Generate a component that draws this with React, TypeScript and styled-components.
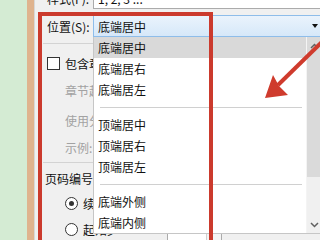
import React from 'react';
import styled, { createGlobalStyle } from 'styled-components';

const GlobalStyle = createGlobalStyle`
  html, body {
    margin: 0;
    padding: 0;
  }
  body {
    font-family: "Noto Sans CJK SC", "Noto Sans", sans-serif;
    font-size: 12px;
    color: #111;
  }
`;

const listGroups = [
  ['底端居中', '底端居右', '底端居左'],
  ['顶端居中', '顶端居右', '顶端居左'],
  ['底端外侧', '底端内侧'],
];

function App() {
  return (
    <Screen>
      <GlobalStyle />
      <GreenStrip />
      <TanStrip />

      <Dialog>
        <FieldRow $top={-13}>
          <FieldLabel>样式(F):</FieldLabel>
          <ComboBox>1, 2, 3 ...</ComboBox>
        </FieldRow>
        <FieldRow $top={6}>
          <FieldLabel>位置(S):</FieldLabel>
          <ComboBox $active>
            底端居中
            <DropArrow />
          </ComboBox>
        </FieldRow>

        <Divider $top={6} />

        {/* texts under the open list are clipped where the list starts (x 93) */}
        <OptionRow $top={9} $indent={4}>
          <Checkbox />
          <OptionText $clip={30}>包含章节号(N)</OptionText>
        </OptionRow>
        <OptionRow $top={7} $indent={22}>
          <OptionText $muted $flush $clip={28}>章节起始样式(P):</OptionText>
        </OptionRow>
        <OptionRow $top={10} $indent={22}>
          <OptionText $muted $flush $clip={28}>使用分隔符(E):</OptionText>
        </OptionRow>
        <OptionRow $top={7} $indent={22}>
          <OptionText $muted $flush>示例:</OptionText>
        </OptionRow>

        <Divider $top={5} />

        <OptionRow $top={5} $indent={2}>
          <OptionText $flush>页码编号</OptionText>
        </OptionRow>
        <OptionRow $top={5} $indent={22}>
          <Radio $checked />
          <OptionText $clip={10}>续前节(C)</OptionText>
        </OptionRow>
        <OptionRow $top={6} $indent={22}>
          <Radio />
          <OptionText $clip={30}>起始页码(A):</OptionText>
          <SpinBox>
            <SpinButton />
          </SpinBox>
        </OptionRow>
      </Dialog>

      <DropList>
        <ListItems>
          {listGroups.map((group, gi) => (
            <React.Fragment key={gi}>
              {gi > 0 && <ListSeparator />}
              {group.map((label, i) => (
                <ListItem key={label} $selected={gi === 0 && i === 0}>
                  {label}
                </ListItem>
              ))}
            </React.Fragment>
          ))}
        </ListItems>
        <ScrollBar>
          <ScrollButton $shade>
            <Chevron viewBox="0 0 9 6">
              <path d="M1 5 L4.5 1.5 L8 5" />
            </Chevron>
          </ScrollButton>
          <ScrollThumb />
          <ScrollTrack />
          <ScrollButton>
            <Chevron viewBox="0 0 9 6">
              <path d="M1 1 L4.5 4.5 L8 1" />
            </Chevron>
          </ScrollButton>
        </ScrollBar>
      </DropList>

      <RedFrame />
      <ArrowMark viewBox="0 0 320 240">
        <line x1="324" y1="40" x2="278" y2="85" />
        <polygon points="265,98 273,75 279,86 288,95" />
      </ArrowMark>
    </Screen>
  );
}

export default App;

const Screen = styled.div`
  position: relative;
  display: flex;
  width: 320px;
  height: 240px;
  overflow: hidden;
  background-color: #f0f0f0;
`;

const GreenStrip = styled.div`
  width: 27px;
  flex-shrink: 0;
  background-color: #d4ebd3;
`;

const TanStrip = styled.div`
  width: 8px;
  flex-shrink: 0;
  background-color: #dfb38e;
  border-right: 1px solid #d8d8d8;
  box-sizing: border-box;
`;

const Dialog = styled.div`
  flex: 1;
  min-width: 0;
  display: flex;
  flex-direction: column;
  padding-left: 8px;
`;

const FieldRow = styled.div<{ $top: number }>`
  display: flex;
  align-items: center;
  height: 22px;
  flex-shrink: 0;
  margin-top: ${({ $top }) => $top}px;
`;

const FieldLabel = styled.div`
  width: 46px;
  margin-left: 4px;
  flex-shrink: 0;
  white-space: nowrap;
`;

const ComboBox = styled.div<{ $active?: boolean }>`
  flex: 1;
  height: 22px;
  box-sizing: border-box;
  margin-right: -10px;
  display: flex;
  align-items: center;
  justify-content: space-between;
  padding-left: 4px;
  white-space: nowrap;
  border: 1px solid ${({ $active }) => ($active ? '#8ebdea' : '#ababab')};
  background: ${({ $active }) =>
    $active ? 'linear-gradient(#eaf3fc, #d6e8f9)' : '#ffffff'};
`;

const DropArrow = styled.span`
  width: 0;
  height: 0;
  margin-right: 11px;
  border-left: 3.5px solid transparent;
  border-right: 3.5px solid transparent;
  border-top: 4px solid #111;
`;

const Divider = styled.div<{ $top: number }>`
  height: 1px;
  flex-shrink: 0;
  margin-top: ${({ $top }) => $top}px;
  background-color: #d3d3d3;
`;

const OptionRow = styled.div<{ $top: number; $indent: number }>`
  display: flex;
  align-items: center;
  height: 20px;
  flex-shrink: 0;
  margin-top: ${({ $top }) => $top}px;
  padding-left: ${({ $indent }) => $indent}px;
  white-space: nowrap;
`;

const Checkbox = styled.span`
  width: 11px;
  height: 11px;
  flex-shrink: 0;
  border: 1px solid #333;
  background-color: #fff;
`;

const Radio = styled.span<{ $checked?: boolean }>`
  position: relative;
  width: 13px;
  height: 13px;
  flex-shrink: 0;
  box-sizing: border-box;
  border: 1px solid #333;
  border-radius: 50%;
  background-color: #fff;

  &::after {
    content: '';
    display: ${({ $checked }) => ($checked ? 'block' : 'none')};
    position: absolute;
    left: 3px;
    top: 3px;
    width: 5px;
    height: 5px;
    border-radius: 50%;
    background-color: #333;
  }
`;

const OptionText = styled.span<{ $muted?: boolean; $flush?: boolean; $clip?: number }>`
  display: inline-block;
  flex-shrink: 0;
  overflow: hidden;
  max-width: ${({ $clip }) => ($clip ? `${$clip}px` : 'none')};
  margin-left: ${({ $flush }) => ($flush ? 0 : 5)}px;
  color: ${({ $muted }) => ($muted ? '#a2a2a2' : '#111')};
`;

const SpinBox = styled.div`
  align-self: flex-start;
  display: flex;
  justify-content: flex-end;
  width: 55px;
  height: 20px;
  margin-top: 14px;
  margin-left: 54px;
  flex-shrink: 0;
  box-sizing: border-box;
  border: 1px solid #ababab;
  background-color: #fff;
`;

const SpinButton = styled.div`
  width: 14px;
  border-left: 1px solid #cfcfcf;
  background-color: #f4f4f4;
`;

const DropList = styled.div`
  position: absolute;
  left: 93px;
  top: 37px;
  width: 232px;
  height: 197px;
  box-sizing: border-box;
  display: flex;
  background-color: #fff;
  border: 1px solid #c6c6c6;
  border-top: none;
`;

const ListItems = styled.div`
  width: 213px;
  display: flex;
  flex-direction: column;
`;

const ListItem = styled.div<{ $selected?: boolean }>`
  height: 21px;
  display: flex;
  align-items: center;
  padding-left: 4px;
  white-space: nowrap;
  background-color: ${({ $selected }) => ($selected ? '#d9d9d9' : 'transparent')};
`;

const ListSeparator = styled.div`
  height: 14px;
  display: flex;
  align-items: center;
  padding: 0 4px 0 6px;

  &::after {
    content: '';
    flex: 1;
    height: 1px;
    background-color: #d0d0d0;
  }
`;

const ScrollBar = styled.div`
  width: 17px;
  display: flex;
  flex-direction: column;
  background-color: #f0f0f0;
  border-left: 1px solid #f4f4f4;
`;

const ScrollButton = styled.div<{ $shade?: boolean }>`
  height: 17px;
  display: flex;
  align-items: center;
  justify-content: center;
  padding-right: 2px;
  background-color: ${({ $shade }) => ($shade ? '#dadada' : 'transparent')};
`;

const Chevron = styled.svg`
  width: 9px;
  height: 6px;
  fill: none;
  stroke: #606060;
  stroke-width: 1.5;
`;

const ScrollThumb = styled.div`
  height: 123px;
  background-color: #dadada;
`;

const ScrollTrack = styled.div`
  flex: 1;
`;

const RedFrame = styled.div`
  position: absolute;
  left: 38px;
  top: 12px;
  width: 175px;
  height: 240px;
  box-sizing: border-box;
  border: 4px solid #cb3a2d;
  pointer-events: none;
`;

const ArrowMark = styled.svg`
  position: absolute;
  left: 0;
  top: 0;
  width: 320px;
  height: 240px;
  pointer-events: none;

  line {
    stroke: #cf3b2d;
    stroke-width: 4;
  }

  polygon {
    fill: #cf3b2d;
  }
`;
